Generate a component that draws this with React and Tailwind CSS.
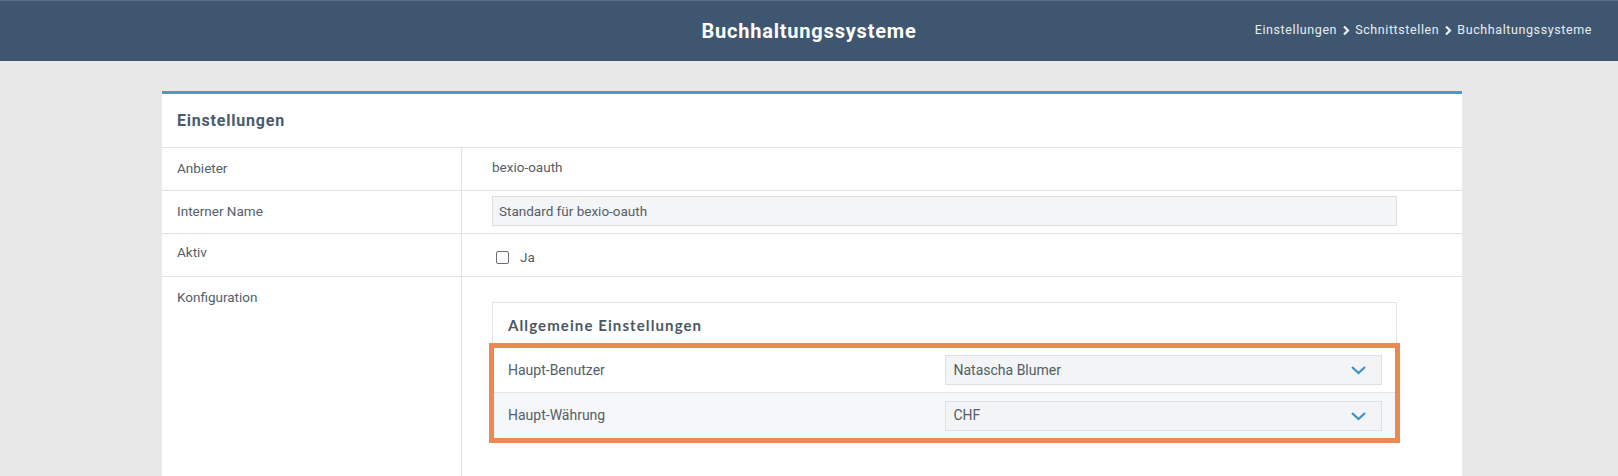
import React from 'react';

// Kleine Chevron-Icons für Breadcrumb und Select
function Crumb() {
  return (
    <svg width="8" height="11" viewBox="0 0 8 11" className="mx-[5px] inline-block">
      <polyline points="2,1.5 6,5.5 2,9.5" fill="none" stroke="#e9eef3" strokeWidth="2.2" />
    </svg>
  );
}

function SelectBox({ value }) {
  return (
    <div className="w-[437px] h-[30px] bg-[#f2f4f5] border border-[#dde1e4] flex items-center justify-between pl-[8px] pr-[14px] text-[14px] text-[#515c68]">
      <span>{value}</span>
      <svg width="17" height="10" viewBox="0 0 17 10">
        <polyline points="2,2 8.5,8 15,2" fill="none" stroke="#3f8fcd" strokeWidth="2.2" />
      </svg>
    </div>
  );
}

function Row({ label, children, className = '', labelPad = 'pt-[11px]' }) {
  return (
    <div className={`grid grid-cols-[300px_1fr] border-b border-[#e3e3e3] ${className}`}>
      <div className={`border-r border-[#e3e3e3] pl-[15px] ${labelPad} text-[13.5px] leading-[18px] text-[#555e69]`}>{label}</div>
      <div className="pl-[30px]">{children}</div>
    </div>
  );
}

export default function App() {
  return (
    <div className="h-[476px] overflow-hidden bg-[#e8e8e8] font-['Roboto',sans-serif]">
      {/* Kopfzeile */}
      <header className="h-[61px] bg-[#3e566f] border-t border-[#5a708a] grid grid-cols-[1fr_auto_1fr] items-center">
        <div />
        <h1 className="text-[20px] font-bold tracking-[0.8px] text-white">Buchhaltungssysteme</h1>
        <nav className="justify-self-end pr-[26px] pb-[2px] text-[12.5px] tracking-[0.6px] text-[#e9eef3] flex items-center">
          Einstellungen<Crumb />Schnittstellen<Crumb />Buchhaltungssysteme
        </nav>
      </header>

      <main className="pt-[30px]">
        <div className="ml-[162px] w-[1300px] bg-white border-t-[3px] border-[#4a9acb]">
          <div className="h-[54px] border-b border-[#e3e3e3] flex items-center pl-[15px] text-[16px] font-bold tracking-[0.8px] text-[#4a5b6d]">
            Einstellungen
          </div>

          <Row label="Anbieter" className="h-[43px]">
            <div className="pt-[10px] text-[13.5px] leading-[18px] text-[#555e69]">bexio-oauth</div>
          </Row>

          <Row label="Interner Name" className="h-[43px]">
            <div className="pt-[5px]">
              <div className="w-[905px] h-[30px] bg-[#f4f5f6] border border-[#dcdfe2] flex items-center pl-[6px] text-[13.5px] text-[#555e69]">
                Standard für bexio-oauth
              </div>
            </div>
          </Row>

          <Row label="Aktiv" className="h-[43px]" labelPad="pt-[9px]">
            <div className="pt-[13px] flex items-center gap-[11px] text-[13.5px] text-[#555e69]">
              <span className="ml-[4px] w-[13px] h-[13px] rounded-[2px] border border-[#6b6f74] bg-white" />
              <span>Ja</span>
            </div>
          </Row>

          <Row label="Konfiguration" className="h-[260px]">
            <div className="pt-[25px]">
              <div className="w-[905px] border border-[#e2e2e2]">
                <div className="h-[45px] flex items-center pl-[15px] font-['Lato',sans-serif] text-[15px] font-bold tracking-[1.1px] text-[#4a5866]">
                  Allgemeine Einstellungen
                </div>
                <div className="relative">
                  <div className="h-[45px] border-b border-[#e3e5e7] grid grid-cols-2 items-center">
                    <span className="pl-[15px] text-[14px] text-[#555e69]">Haupt-Benutzer</span>
                    <SelectBox value="Natascha Blumer" />
                  </div>
                  <div className="h-[45px] bg-[#f5f7f8] grid grid-cols-2 items-center">
                    <span className="pl-[15px] text-[14px] text-[#555e69]">Haupt-Währung</span>
                    <SelectBox value="CHF" />
                  </div>
                  {/* Markierung */}
                  <div className="absolute left-[-4px] right-[-4px] top-[-5px] bottom-[-5px] border-[5px] border-[#ea8a50] pointer-events-none" />
                </div>
              </div>
            </div>
          </Row>
        </div>
      </main>
    </div>
  );
}
